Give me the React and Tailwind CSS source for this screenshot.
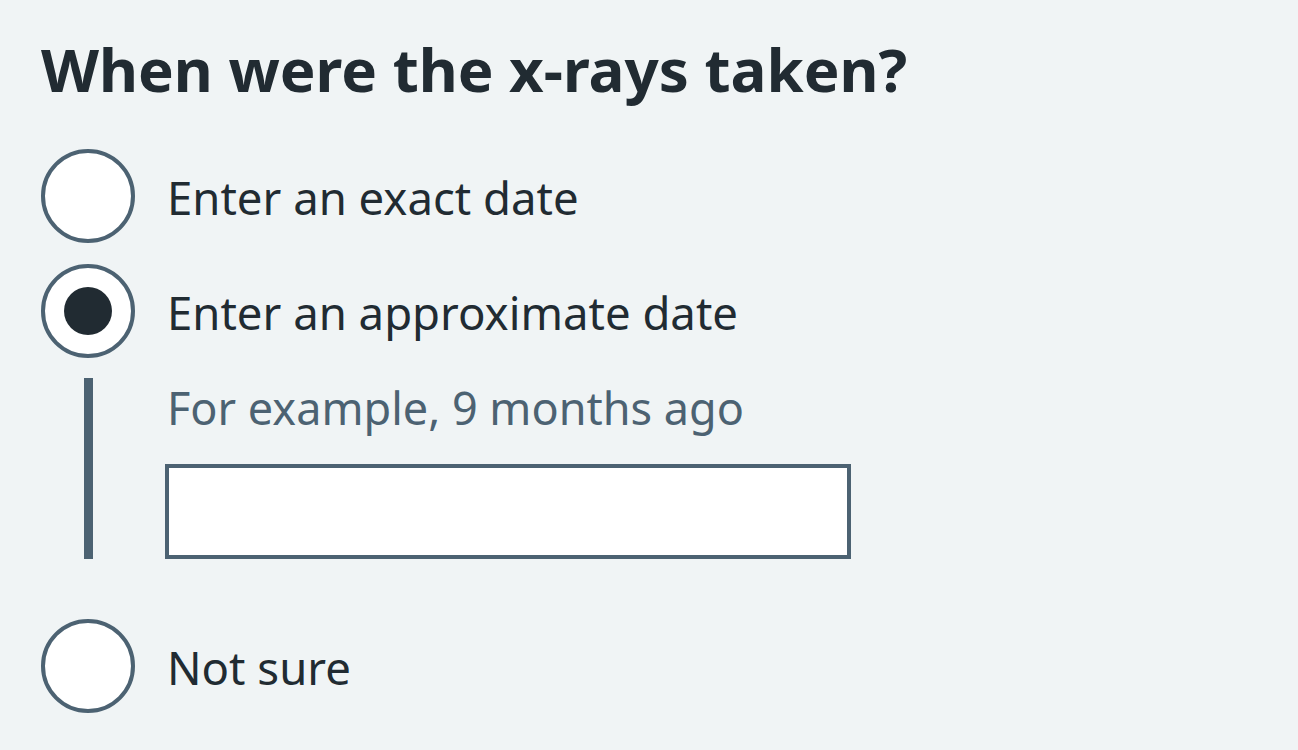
import React, { useState } from 'react';

const options = [
  { id: 'exact', label: 'Enter an exact date' },
  { id: 'approx', label: 'Enter an approximate date' },
  { id: 'unsure', label: 'Not sure' },
];

const Radio = ({ checked, label, onSelect }) => (
  <label className="flex items-center gap-[32px] cursor-pointer" onClick={onSelect}>
    <span className="w-[94px] h-[94px] shrink-0 rounded-full border-4 border-[#4c6272] bg-white flex items-center justify-center">
      {checked && <span className="w-[48px] h-[48px] rounded-full bg-[#212b32]" />}
    </span>
    <span className="text-[45.5px] leading-none pt-[3px] text-[#212b32]">{label}</span>
  </label>
);

export default function App() {
  const [selected, setSelected] = useState('approx');
  const [approx, setApprox] = useState('');

  return (
    <div
      className="min-h-screen w-full bg-[#f0f4f5] pl-[41px] pt-[39px]"
      style={{ fontFamily: '"Noto Sans", "Open Sans", sans-serif' }}
    >
      <h1 className="text-[60px] font-bold leading-none text-[#212b32]">When were the x-rays taken?</h1>

      <div className="mt-[50px] flex flex-col">
        <Radio checked={selected === 'exact'} label={options[0].label} onSelect={() => setSelected('exact')} />
        <div className="mt-[21px]">
          <Radio checked={selected === 'approx'} label={options[1].label} onSelect={() => setSelected('approx')} />
        </div>
        {selected === 'approx' && (
          <div className="mt-[20px] ml-[43px] border-l-[9px] border-[#4c6272] pl-[72px] pt-[7px]">
            <p className="text-[45px] leading-none pl-[2px] text-[#4c6272]">For example, 9 months ago</p>
            <input
              type="text"
              value={approx}
              onChange={(e) => setApprox(e.target.value)}
              className="mt-[34px] block w-[686px] h-[95px] border-4 border-[#4c6272] bg-white px-4 text-[40px] text-[#212b32] outline-none"
            />
          </div>
        )}
        <div className={selected === 'approx' ? 'mt-[60px]' : 'mt-[21px]'}>
          <Radio checked={selected === 'unsure'} label={options[2].label} onSelect={() => setSelected('unsure')} />
        </div>
      </div>
    </div>
  );
}
